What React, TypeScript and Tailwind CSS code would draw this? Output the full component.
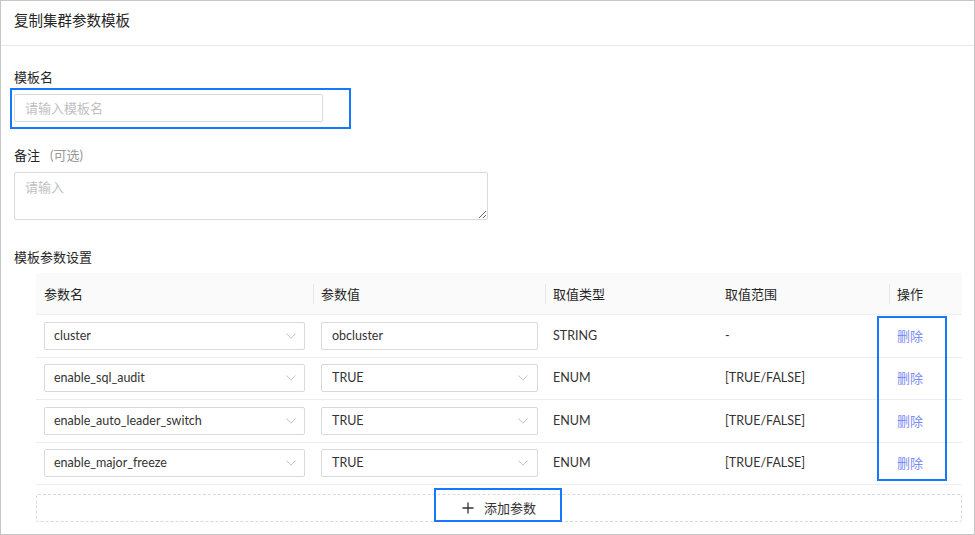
import React from "react";

const rows = [
  { name: "cluster", value: "obcluster", select: false, type: "STRING", range: "-" },
  { name: "enable_sql_audit", value: "TRUE", select: true, type: "ENUM", range: "[TRUE/FALSE]" },
  { name: "enable_auto_leader_switch", value: "TRUE", select: true, type: "ENUM", range: "[TRUE/FALSE]" },
  { name: "enable_major_freeze", value: "TRUE", select: true, type: "ENUM", range: "[TRUE/FALSE]" },
];

function Chevron() {
  return (
    <svg width="10" height="6" viewBox="0 0 10 6" className="shrink-0">
      <path d="M0.5 0.5 L5 5.2 L9.5 0.5" fill="none" stroke="#c4c4c4" strokeWidth="1" />
    </svg>
  );
}

export default function App() {
  return (
    <div className="relative w-[975px] h-[535px] bg-white border border-[#c6c6c6] text-[#333333] overflow-hidden font-['Lato','Noto_Sans_CJK_SC',sans-serif]">
      {/* header */}
      <div className="px-[13px] pt-[10px] pb-[14px] border-b border-[#e8e8e8] text-[14.5px] leading-[20px] text-[#262626]">
        复制集群参数模板
      </div>

      {/* body */}
      <div className="px-[13px] text-[13px]">
        <div className="mt-[21px] leading-[20px] text-[#262626]">模板名</div>
        <div className="mt-[7px] w-[309px] h-[28px] border border-[#d9d9d9] rounded-[2px] pl-[10px] flex items-center leading-[20px] text-[#c0c0c0]">
          请输入模板名
        </div>

        <div className="mt-[23px] leading-[20px] text-[#262626]">
          备注<span className="ml-[10px] text-[#999999]">(可选)</span>
        </div>
        <textarea
          className="block mt-[7px] w-[474px] h-[48px] border border-[#d9d9d9] rounded-[2px] pl-[10px] pt-[4px] leading-[20px] text-[13px] placeholder:text-[#c0c0c0] outline-none"
          placeholder="请输入"
        />

        <div className="mt-[27px] leading-[20px] text-[#262626]">模板参数设置</div>

        {/* table */}
        <div className="mt-[6px] ml-[22px] w-[926px]">
          <div className="flex h-[42px] bg-[#fafafa] border-b border-[#eeeeee] leading-[20px] text-[#262626]">
            <div className="w-[277px] flex items-center pl-[8px]">参数名</div>
            <div className="w-[232px] flex items-center">
              <span className="w-px h-[20px] bg-[#e6e6e6]" />
              <span className="pl-[7px]">参数值</span>
            </div>
            <div className="w-[172px] flex items-center">
              <span className="w-px h-[20px] bg-[#e6e6e6]" />
              <span className="pl-[7px]">取值类型</span>
            </div>
            <div className="w-[172px] flex items-center pl-[8px]">取值范围</div>
            <div className="w-[73px] flex items-center">
              <span className="w-px h-[20px] bg-[#e6e6e6]" />
              <span className="pl-[7px]">操作</span>
            </div>
          </div>

          {rows.map((r) => (
            <div key={r.name} className="flex h-[42.5px] border-b border-[#eeeeee] leading-[20px] text-[12.5px]">
              <div className="w-[277px] flex items-center px-[8px]">
                <div className="w-full h-[28px] border border-[#d9d9d9] rounded-[2px] pl-[9px] pr-[8px] flex items-center justify-between">
                  <span>{r.name}</span>
                  <Chevron />
                </div>
              </div>
              <div className="w-[232px] flex items-center pl-[8px]">
                <div className="w-[217px] h-[28px] border border-[#d9d9d9] rounded-[2px] pl-[10px] pr-[9px] flex items-center justify-between">
                  <span>{r.value}</span>
                  {r.select ? <Chevron /> : null}
                </div>
              </div>
              <div className="w-[172px] flex items-center pl-[8px]">{r.type}</div>
              <div className="w-[172px] flex items-center pl-[8px]">{r.range}</div>
              <div className="w-[73px] flex items-center pl-[8px] text-[13px] text-[#7b8cf5]">删除</div>
            </div>
          ))}

          <div className="mt-[9px] h-[28px] border border-dashed border-[#d9d9d9] rounded-[2px] flex items-center justify-center leading-[20px]">
            <svg width="12" height="12" viewBox="0 0 12 12" className="mr-[10px]">
              <path d="M6 0.5 V11.5 M0.5 6 H11.5" stroke="#333" strokeWidth="1.3" />
            </svg>
            <span>添加参数</span>
          </div>
        </div>
      </div>

      {/* annotation highlights */}
      <div className="absolute left-[9px] top-[87px] w-[341px] h-[41px] border-2 border-[#1677ff]" />
      <div className="absolute left-[876px] top-[315px] w-[70px] h-[165px] border-2 border-[#1677ff]" />
      <div className="absolute left-[433px] top-[487px] w-[128px] h-[34px] border-2 border-[#1677ff]" />
    </div>
  );
}
